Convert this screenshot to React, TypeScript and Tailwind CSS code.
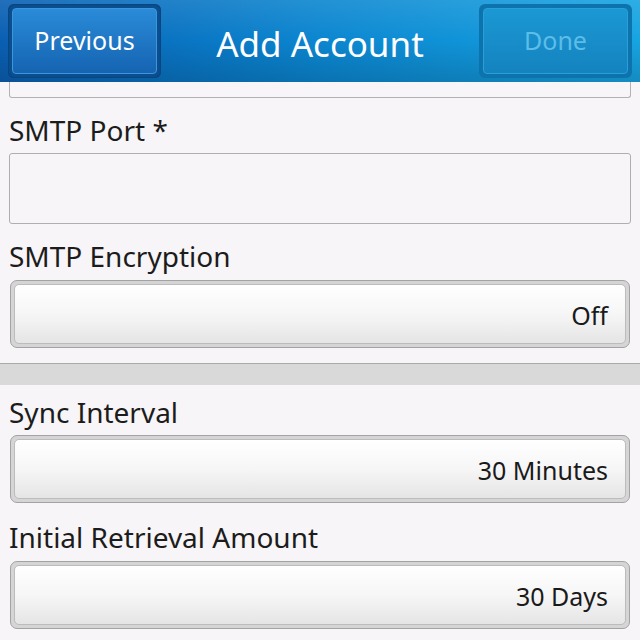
import React from 'react';

function Picker({ value, className }: { value: string; className?: string }) {
  return (
    <div className={`mx-[10px] rounded-[7px] border border-[#a3a3a3] bg-[#d6d5d6] p-[3px] ${className ?? ''}`}>
      <div className="h-[60px] rounded-[5px] border border-[#bdbcbd] bg-gradient-to-b from-[#ffffff] via-[#f7f6f7] to-[#e6e5e6] flex items-center justify-end pr-[17px] pt-[3px] text-[25px] text-[#1a1a1a]">
        {value}
      </div>
    </div>
  );
}

function Label({ text, className }: { text: string; className?: string }) {
  return <div className={`px-[9px] text-[28px] leading-[34px] text-[#1c1c1c] ${className ?? ''}`}>{text}</div>;
}

export default function App() {
  return (
    <div className="w-[640px] h-[640px] overflow-hidden bg-[#f7f5f7] font-['Noto_Sans',sans-serif]">
      {/* title bar */}
      <div className="relative h-[82px] bg-gradient-to-r from-[#0a5fb3] via-[#0b86d0] to-[#17a4e2] flex items-center justify-between px-[8px]">
        <div className="absolute inset-0 bg-gradient-to-b from-white/10 via-transparent to-black/15 pointer-events-none" />
        <div className="relative w-[153px] h-[74px] rounded-[6px] bg-[#0b4e8f] p-[4px] shadow-[inset_0_0_2px_rgba(0,0,0,0.4)]">
          <div className="h-full rounded-[4px] border border-[#3b97dd] bg-gradient-to-b from-[#2a8bd8] to-[#1564b2] flex items-center justify-center text-white text-[25px]">
            Previous
          </div>
        </div>
        <div className="relative text-white text-[35px] leading-none pt-[4px]">Add Account</div>
        <div className="relative w-[153px] h-[74px] rounded-[6px] bg-[#0c73ad] p-[4px]">
          <div className="h-full rounded-[4px] border border-[#27a0d9] bg-gradient-to-b from-[#1b98d4] to-[#1483bf] flex items-center justify-center text-[#5cbde8] text-[25px]">
            Done
          </div>
        </div>
      </div>

      {/* cut-off field above */}
      <div className="mx-[9px] h-[16px] border-x border-b border-[#b3b1b3] rounded-b-[3px]" />

      <Label text="SMTP Port *" className="mt-[15px]" />
      <div className="mx-[9px] mt-[6px] h-[71px] rounded-[3px] border border-[#b0aeb0] bg-[#f7f5f7]" />

      <Label text="SMTP Encryption" className="mt-[15px]" />
      <Picker value="Off" className="mt-[7px]" />

      <div className="mt-[15px] h-[22px] border-t border-[#a9a9a9] bg-[#dad9da]" />

      <Label text="Sync Interval" className="mt-[10px]" />
      <Picker value="30 Minutes" className="mt-[6px]" />

      <Label text="Initial Retrieval Amount" className="mt-[17px]" />
      <Picker value="30 Days" className="mt-[7px]" />
    </div>
  );
}
